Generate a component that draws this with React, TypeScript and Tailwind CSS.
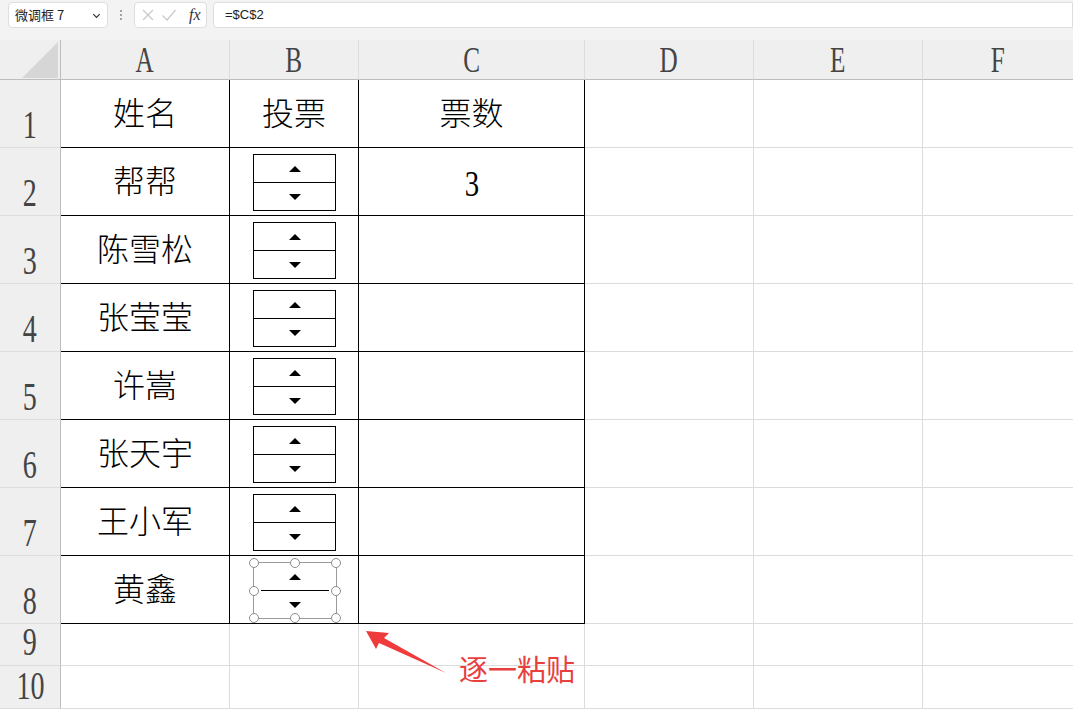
import React from 'react';

const serif = { fontFamily: '"Liberation Serif", "Noto Sans CJK SC", serif' };
const cjk = { fontFamily: '"Liberation Serif", "Noto Sans CJK SC", sans-serif' };

const colWidths = ['61px', '169px', '129px', '226px', '169px', '169px', '1fr'];
const cols = ['A', 'B', 'C', 'D', 'E', 'F'];
const names = ['姓名', '帮帮', '陈雪松', '张莹莹', '许嵩', '张天宇', '王小军', '黄鑫'];

function Spinner({ selected }: { selected?: boolean }) {
  if (selected) {
    const handles = [
      [0, 0], [50, 0], [100, 0],
      [0, 50], [100, 50],
      [0, 100], [50, 100], [100, 100],
    ];
    return (
      <div className="relative w-[84px] h-[57px] border border-[#9a9a9a] flex flex-col">
        <div className="flex-1 flex items-center justify-center">
          <div className="w-0 h-0 border-l-[6px] border-r-[6px] border-b-[6px] border-l-transparent border-r-transparent border-b-black" />
        </div>
        <div className="mx-[7px] h-px bg-black" />
        <div className="flex-1 flex items-center justify-center">
          <div className="w-0 h-0 border-l-[6px] border-r-[6px] border-t-[6px] border-l-transparent border-r-transparent border-t-black" />
        </div>
        {handles.map(([x, y], i) => (
          <span
            key={i}
            className="absolute w-[10px] h-[10px] -ml-[5px] -mt-[5px] rounded-full bg-white border border-[#8c8c8c]"
            style={{ left: `${x}%`, top: `${y}%` }}
          />
        ))}
      </div>
    );
  }
  return (
    <div className="w-[83px] h-[57px] border border-black flex flex-col bg-white">
      <div className="flex-1 flex items-center justify-center">
        <div className="w-0 h-0 border-l-[6px] border-r-[6px] border-b-[6px] border-l-transparent border-r-transparent border-b-black" />
      </div>
      <div className="h-px bg-black" />
      <div className="flex-1 flex items-center justify-center">
        <div className="w-0 h-0 border-l-[6px] border-r-[6px] border-t-[6px] border-l-transparent border-r-transparent border-t-black" />
      </div>
    </div>
  );
}

export default function App() {
  const rowHeights = ['40px', ...Array(8).fill('68px'), '42px', '43px', '1fr'];
  const rows = Array.from({ length: 10 }, (_, i) => i + 1);

  return (
    <div className="relative w-[1073px] h-[710px] overflow-hidden bg-white flex flex-col">
      {/* formula bar */}
      <div className="h-[40px] bg-[#f3f3f3] flex items-start pt-[2px] pl-[8px] gap-[6px]" style={{ fontFamily: '"Noto Sans CJK SC", "Liberation Sans", sans-serif' }}>
        <div className="w-[100px] h-[26px] bg-white border border-[#dedede] rounded-[4px] flex items-center justify-between pl-[6px] pr-[5px] text-[13px] text-[#222]">
          <span>微调框 7</span>
          <svg width="11" height="11" viewBox="0 0 12 12" fill="none" stroke="#333" strokeWidth="1.3"><path d="M2.5 4.5 6 8l3.5-3.5" /></svg>
        </div>
        <div className="w-[14px] h-[26px] flex flex-col items-center justify-center gap-[2px]">
          <span className="w-[2px] h-[2px] bg-[#888] rounded-full" />
          <span className="w-[2px] h-[2px] bg-[#888] rounded-full" />
          <span className="w-[2px] h-[2px] bg-[#888] rounded-full" />
        </div>
        <div className="w-[73px] h-[26px] bg-white border border-[#dedede] rounded-[4px] flex items-center pl-[6px] gap-[6px]">
          <svg width="14" height="14" viewBox="0 0 14 14" stroke="#c8c8c8" strokeWidth="1.2" fill="none"><path d="M2 2l10 10M12 2 2 12" /></svg>
          <svg width="16" height="14" viewBox="0 0 16 14" stroke="#c8c8c8" strokeWidth="1.2" fill="none"><path d="M1.5 7.5 6 12 14.5 2" /></svg>
          <span className="ml-[6px] text-[16px] italic text-[#333]" style={serif}>fx</span>
        </div>
        <div className="flex-1 h-[26px] bg-white border border-[#dedede] rounded-l-[4px] flex items-center pl-[11px] text-[13px] text-[#222]" style={{ fontFamily: '"Liberation Sans", sans-serif' }}>
          =$C$2
        </div>
      </div>

      {/* sheet grid */}
      <div
        className="grid flex-1"
        style={{ gridTemplateColumns: colWidths.join(' '), gridTemplateRows: rowHeights.join(' ') }}
      >
        {/* header row */}
        <div className="bg-[#efefef] border-r border-b border-[#bdbdbd] relative">
          <svg className="absolute left-[22px] top-[2px]" width="36" height="36" viewBox="0 0 36 36"><path d="M36 0V36H0Z" fill="#d6d6d6" /></svg>
        </div>
        {cols.map((c, i) => (
          <div
            key={c}
            className={`bg-[#efefef] border-b border-[#bdbdbd] flex items-center justify-center text-[#444] ${i < 5 ? 'border-r border-r-[#dcdcdc]' : ''}`}
            style={serif}
          >
            <span className="text-[35px] leading-none scale-x-[0.72] mt-[1px]">{c}</span>
          </div>
        ))}

        {rows.map((r) => {
          const inTable = r <= 8;
          const blk = inTable ? 'border-black' : 'border-[#dcdcdc]';
          return (
            <React.Fragment key={r}>
              <div
                className="bg-[#efefef] border-r border-b border-r-[#bdbdbd] border-b-[#dcdcdc] flex items-end justify-center text-[#444] leading-none"
                style={serif}
              >
                <span className={`text-[39px] leading-none scale-x-[0.72] ${r === 9 ? 'mb-[4px]' : 'mb-[3px]'}`}>{r}</span>
              </div>
              <div className={`border-r border-b ${blk} flex items-center justify-center text-[32px] font-light text-black`} style={cjk}>
                {inTable ? names[r - 1] : ''}
              </div>
              {r === 1 ? (
                <div className={`border-r border-b ${blk} flex items-center justify-center text-[32px] font-light text-black`} style={cjk}>
                  投票
                </div>
              ) : (
                <div className={`border-r border-b ${blk} flex items-start pt-[6px] pl-[23px]`}>
                  {inTable ? <Spinner selected={r === 8} /> : null}
                </div>
              )}
              <div className={`border-r border-b ${blk} flex items-center justify-center font-light text-black`} style={cjk}>
                {r === 1 ? (
                  <span className="text-[32px]">票数</span>
                ) : r === 2 ? (
                  <span className="text-[36px] leading-none scale-x-[0.8] mt-[4px]">3</span>
                ) : null}
              </div>
              <div className="border-r border-b border-[#dcdcdc]" />
              <div className="border-r border-b border-[#dcdcdc]" />
              <div className="border-b border-[#dcdcdc]" />
            </React.Fragment>
          );
        })}
      </div>

      {/* annotation */}
      <svg className="absolute left-0 top-0 pointer-events-none" width="1073" height="710">
        <polygon points="366,631 389,633 384,638 446,673 379,643 376,649" fill="#ef3b3b" />
      </svg>
      <div
        className="absolute left-[459px] top-[654px] text-[29px] text-[#e8403f] leading-none"
        style={{ fontFamily: '"Noto Sans CJK SC", sans-serif' }}
      >
        逐一粘贴
      </div>
    </div>
  );
}
